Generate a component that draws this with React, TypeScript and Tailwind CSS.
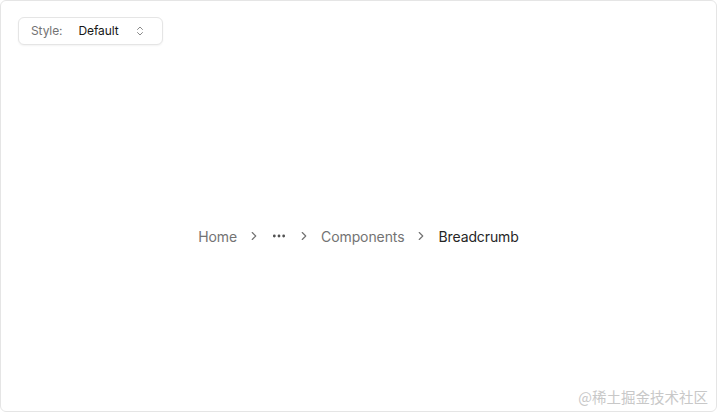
import React from "react";

function ChevronRight() {
  return (
    <svg width="14" height="14" viewBox="0 0 24 24" fill="none" stroke="currentColor" strokeWidth="2" strokeLinecap="round" strokeLinejoin="round">
      <path d="m9 18 6-6-6-6" />
    </svg>
  );
}

function Dots() {
  return (
    <svg width="16" height="16" viewBox="0 0 24 24" fill="none" stroke="currentColor" strokeWidth="2.2" strokeLinecap="round" strokeLinejoin="round">
      <circle cx="12" cy="12" r="1" />
      <circle cx="19" cy="12" r="1" />
      <circle cx="5" cy="12" r="1" />
    </svg>
  );
}

function UpDown() {
  return (
    <svg width="12" height="12" viewBox="0 0 24 24" fill="none" stroke="currentColor" strokeWidth="2" strokeLinecap="round" strokeLinejoin="round">
      <path d="m7 15 5 5 5-5" />
      <path d="m7 9 5-5 5 5" />
    </svg>
  );
}

export default function App() {
  return (
    <div
      className="relative flex h-[412px] w-[717px] flex-col overflow-hidden rounded-md border border-[#e5e5e5] bg-white"
      style={{ fontFamily: "Inter, 'Noto Sans CJK SC', sans-serif" }}
    >
      <div className="flex px-[17px] pt-[16px]">
        <div className="flex h-[28px] w-[145px] items-center rounded-md border border-[#e5e5e5] bg-white pl-[12px] pr-[16px] text-[12px] tracking-[-0.1px] shadow-[0_1px_2px_rgba(0,0,0,0.05)]">
          <span className="text-[#737373]">Style:</span>
          <span className="ml-[16px] text-[#171717]">Default</span>
          <span className="ml-auto text-[#8a8a8a]">
            <UpDown />
          </span>
        </div>
      </div>
      <div className="flex flex-1 items-center justify-center pt-[16px]">
        <nav aria-label="breadcrumb">
          <ol className="flex items-center gap-[10px] text-[14px] tracking-[-0.1px] text-[#737373]">
            <li>Home</li>
            <li className="flex items-center"><ChevronRight /></li>
            <li className="flex items-center text-[#525252]"><Dots /></li>
            <li className="flex items-center"><ChevronRight /></li>
            <li>Components</li>
            <li className="flex items-center"><ChevronRight /></li>
            <li className="text-[#262626]">Breadcrumb</li>
          </ol>
        </nav>
      </div>
      <div className="pointer-events-none absolute bottom-[3px] right-[8px] text-[14.5px] text-[#c8c8c8]" style={{ fontFamily: "'Noto Sans CJK SC', sans-serif" }}>
        @稀土掘金技术社区
      </div>
    </div>
  );
}
